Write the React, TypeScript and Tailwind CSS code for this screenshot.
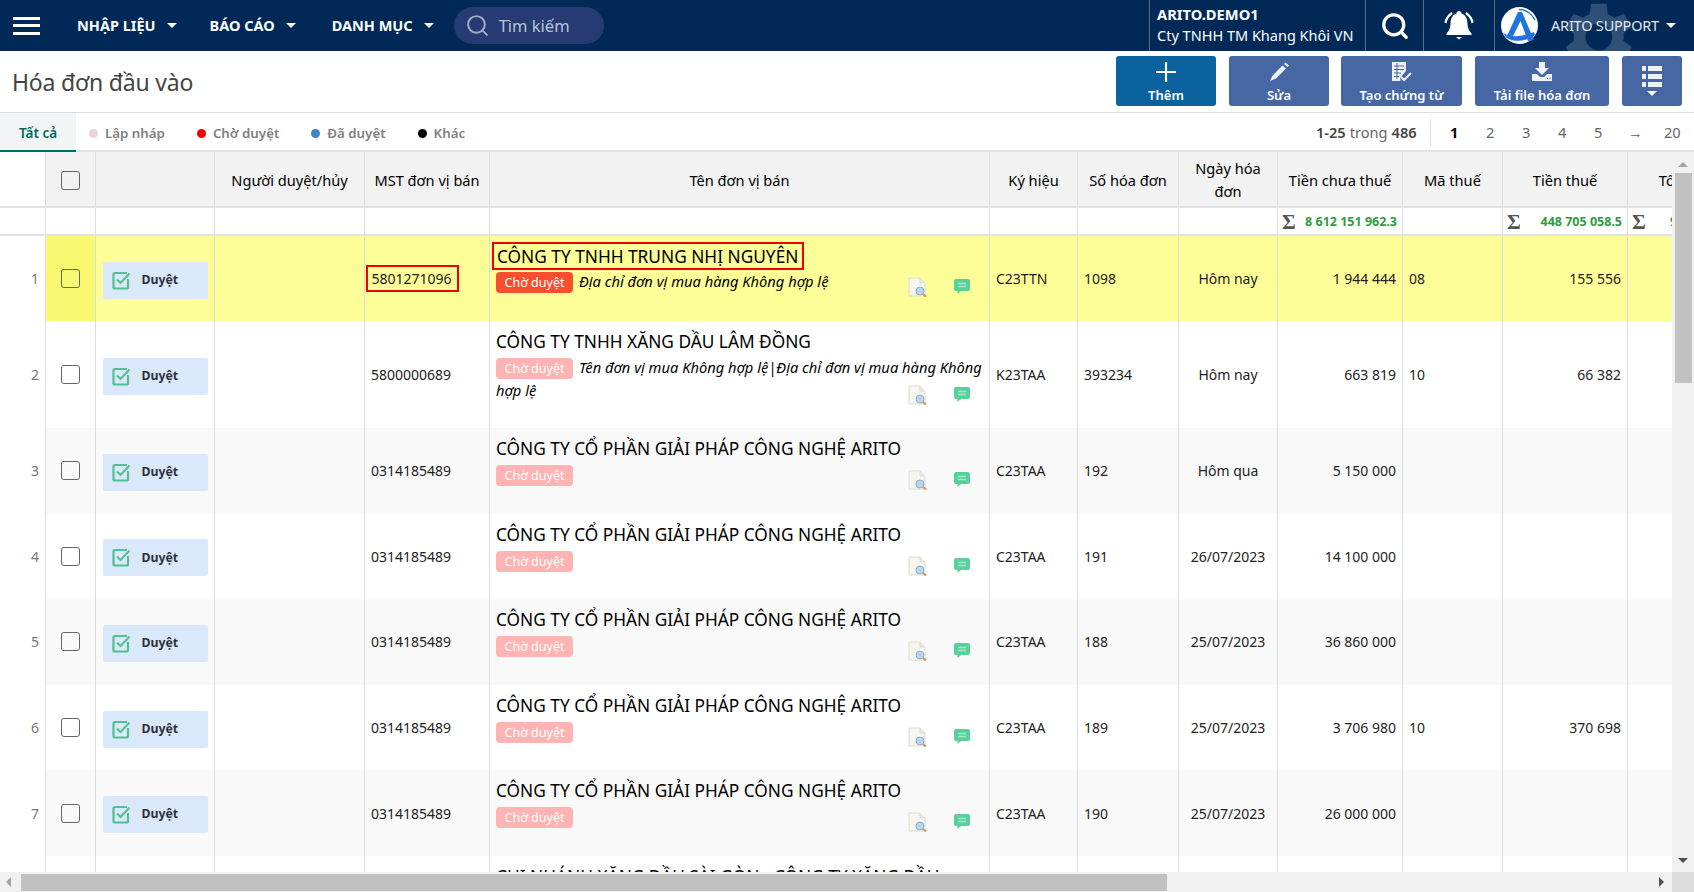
import React from "react";
import { Search } from "lucide-react";

const COLS =
  "grid grid-cols-[46px_50px_119px_150px_125px_500px_88px_101px_99px_125px_100px_125px_147px] w-[1775px]";
const CELL = "border-r border-[#dcdcdc] flex items-center";

type Row = {
  no: number;
  mst: string;
  name: string;
  note?: string;
  sym: string;
  num: string;
  date: string;
  amount: string;
  code?: string;
  tax?: string;
};

const rows: Row[] = [
  { no: 2, mst: "5800000689", name: "CÔNG TY TNHH XĂNG DẦU LÂM ĐỒNG", note: "Tên đơn vị mua Không hợp lệ|Địa chỉ đơn vị mua hàng Không hợp lệ", sym: "K23TAA", num: "393234", date: "Hôm nay", amount: "663 819", code: "10", tax: "66 382" },
  { no: 3, mst: "0314185489", name: "CÔNG TY CỔ PHẦN GIẢI PHÁP CÔNG NGHỆ ARITO", sym: "C23TAA", num: "192", date: "Hôm qua", amount: "5 150 000" },
  { no: 4, mst: "0314185489", name: "CÔNG TY CỔ PHẦN GIẢI PHÁP CÔNG NGHỆ ARITO", sym: "C23TAA", num: "191", date: "26/07/2023", amount: "14 100 000" },
  { no: 5, mst: "0314185489", name: "CÔNG TY CỔ PHẦN GIẢI PHÁP CÔNG NGHỆ ARITO", sym: "C23TAA", num: "188", date: "25/07/2023", amount: "36 860 000" },
  { no: 6, mst: "0314185489", name: "CÔNG TY CỔ PHẦN GIẢI PHÁP CÔNG NGHỆ ARITO", sym: "C23TAA", num: "189", date: "25/07/2023", amount: "3 706 980", code: "10", tax: "370 698" },
  { no: 7, mst: "0314185489", name: "CÔNG TY CỔ PHẦN GIẢI PHÁP CÔNG NGHỆ ARITO", sym: "C23TAA", num: "190", date: "25/07/2023", amount: "26 000 000" },
];

function Caret({ className = "" }: { className?: string }) {
  return <span className={`inline-block w-0 h-0 border-x-[5px] border-x-transparent border-t-[5px] border-t-white ${className}`} />;
}

function NavItem({ label, className }: { label: string; className: string }) {
  return (
    <div className={`flex items-center text-[14.5px] font-bold text-white ${className}`}>
      {label}
      <Caret className="ml-[11px]" />
    </div>
  );
}

function ToolButton({ label, w, color = "bg-[#4667a4]", children }: { label: string; w: string; color?: string; children: React.ReactNode }) {
  return (
    <div className={`${w} ${color} h-[50px] rounded-[3px] flex flex-col items-center justify-end pb-[1px] text-white text-[13px] font-semibold`}>
      <div className="h-[26px] flex items-center justify-center">{children}</div>
      <div className="leading-[20px]">{label}</div>
    </div>
  );
}

function Tab({ dot, label }: { dot: string; label: string }) {
  return (
    <div className="flex items-center gap-[7px] text-[13.3px] font-semibold text-[#808080]">
      <span className={`w-[9px] h-[9px] rounded-full ${dot}`} />
      {label}
    </div>
  );
}

function CheckBox() {
  return <span className="block w-[19px] h-[19px] rounded-[3px] border border-[#666666]" />;
}

function ApproveButton() {
  return (
    <div className="w-[105px] h-[37px] mt-[3px] bg-[#d9e8fa] rounded-[2px] flex items-center pl-[9px] gap-[11px] text-[12.3px] font-bold text-[#2f2f3a]">
      <svg width="19" height="19" viewBox="0 0 19 19" fill="none">
        <path d="M16 8v8a1.500 1.500 0 0 1-1.500 1.500H3A1.500 1.500 0 0 1 1.500 16V3.500A1.500 1.500 0 0 1 3 2h12" stroke="#55bf8e" strokeWidth="2.200" />
        <path d="M5 8.500l3.500 3.500L17.500 2.500" stroke="#55bf8e" strokeWidth="2" />
      </svg>
      Duyệt
    </div>
  );
}

function DocIcon() {
  return (
    <svg width="19" height="20" viewBox="0 0 19 20" className="blur-[0.4px]">
      <path d="M1 1h11l5 5v13H1z" fill="#f6f6ee" stroke="#dcdcd0" />
      <path d="M12 1v5h5" fill="#e8e8dc" stroke="#dcdcd0" />
      <circle cx="12" cy="14" r="4" fill="#bcd4ea" stroke="#8fb0d2" />
      <path d="M15 17l3 2.500" stroke="#d49a5a" strokeWidth="2.200" />
    </svg>
  );
}

function ChatIcon() {
  return (
    <svg width="16" height="15" viewBox="0 0 16 15" className="blur-[0.3px] mt-[2px]">
      <path d="M2 0h12a2 2 0 0 1 2 2v8a2 2 0 0 1-2 2H7l-3.500 3V12H2a2 2 0 0 1-2-2V2a2 2 0 0 1 2-2z" fill="#58d09c" />
      <path d="M4 4.500h8M4 7.500h8" stroke="#a6e6ca" strokeWidth="1.500" />
    </svg>
  );
}

function NameCell({ name, note, active, boxed }: { name: string; note?: string; active?: boolean; boxed?: boolean }) {
  return (
    <div className={`border-r border-[#dcdcdc] pl-[6px] pr-[2px] text-black ${boxed ? "pt-[6px]" : "pt-[7px]"}`}>
      <div className={`text-[17.3px] whitespace-nowrap ${boxed ? "w-[312px] -ml-[4px] px-[3px] pt-[1px] border-2 border-[#f00000] leading-[23px]" : "leading-[28px]"}`}>{name}</div>
      <div className="text-[14.7px] italic leading-[22px]">
        <span className={`inline-block w-[77px] h-[21px] rounded-[4px] text-center not-italic text-[12.5px] text-white leading-[21px] mr-[6px] ${active ? "bg-[#f94f2e]" : "bg-[#ffb3b3]"}`}>Chờ duyệt</span>
        {note}
      </div>
      <div className="flex justify-end items-start gap-[27px] -mt-[16px] pr-[17px]">
        <DocIcon />
        <ChatIcon />
      </div>
    </div>
  );
}

function Sum({ value, pad = "pr-[5px]" }: { value: string; pad?: string }) {
  return (
    <div className={`${CELL} justify-between pl-[4px] pt-[2px] ${pad}`}>
      <span className="text-[21px] font-bold leading-none text-[#555555] font-['Liberation_Serif',serif]">Σ</span>
      <span className="text-[12.5px] font-bold text-[#2f9b3f]">{value}</span>
    </div>
  );
}

function RowCells({ row }: { row: Row }) {
  return (
    <>
      <div className={`${CELL} px-[6px]`}>{row.sym}</div>
      <div className={`${CELL} px-[6px]`}>{row.num}</div>
      <div className={`${CELL} justify-center`}>{row.date}</div>
      <div className={`${CELL} justify-end px-[6px]`}>{row.amount}</div>
      <div className={`${CELL} px-[6px]`}>{row.code}</div>
      <div className={`${CELL} justify-end px-[6px]`}>{row.tax}</div>
      <div className={CELL} />
    </>
  );
}

export default function App() {
  return (
    <div className="w-screen h-screen overflow-hidden flex flex-col bg-white font-['Noto_Sans',sans-serif] text-[#222222]">
      {/* top bar */}
      <header className="h-[51px] shrink-0 bg-[#012958] flex items-center text-white relative overflow-hidden">
        <div className="ml-[13px] w-[27px] flex flex-col gap-[4.500px]">
          <span className="h-[3px] bg-white" />
          <span className="h-[3px] bg-white" />
          <span className="h-[3px] bg-white" />
        </div>
        <NavItem label="NHẬP LIỆU" className="ml-[37px]" />
        <NavItem label="BÁO CÁO" className="ml-[33px]" />
        <NavItem label="DANH MỤC" className="ml-[36px]" />
        <div className="ml-[20px] w-[150px] h-[37px] rounded-full bg-[#263a73] flex items-center pl-[11px] gap-[9px] text-[16.5px] text-[#b8c3d6]">
          <Search size={25} strokeWidth={1.900} className="text-[#9fb0c8]" />
          <span className="pt-[2px]">Tìm kiếm</span>
        </div>
        <div className="ml-auto self-stretch flex">
          <div className="w-[216px] border-l border-[#55708f] pl-[7px] pb-[1px] flex flex-col justify-center">
            <div className="text-[14.7px] font-bold leading-[20px]">ARITO.DEMO1</div>
            <div className="text-[14.5px] leading-[22px]">Cty TNHH TM Khang Khôi VN</div>
          </div>
          <div className="w-[58px] border-l border-[#55708f] flex items-center justify-center">
            <Search size={30} strokeWidth={2.600} className="text-white" />
          </div>
          <div className="w-[71px] border-l border-[#55708f] flex items-center justify-center">
            <svg width="32" height="32" viewBox="0 0 32 32" fill="white">
              <path d="M16 1c1.500 0 2.500 1 2.500 2.500C23 5 24.500 9 24.500 14c0 4 1.500 7 4 9.500V25h-25v-1.500c2.500-2.500 4-5.500 4-9.500 0-5 1.500-9 6-10.500C13.500 2 14.500 1 16 1z" />
              <path d="M13 27h6l-3 2.500z" />
              <path d="M2.500 13C3 9 5.500 5.500 9 3M29.500 13C29 9 26.500 5.500 23 3" fill="none" stroke="white" strokeWidth="2.200" />
            </svg>
          </div>
          <div className="w-[200px] border-l border-[#55708f] relative flex items-center pl-[6px]">
            <svg width="37" height="37" viewBox="0 0 37 37" className="shrink-0 relative z-10">
              <circle cx="18.500" cy="18.500" r="18.500" fill="white" />
              <path d="M17 5h4l12 28-6 1-7.500-20L12 29H6z" fill="#1f74e0" />
              <path d="M1.500 25C6 30 20 31 33 25l1 3C24 36 8 35 4 29z" fill="#1f74e0" />
              <path d="M18 2.500C25 2.500 31 7 34 13" fill="none" stroke="#1f74e0" strokeWidth="1.500" />
            </svg>
            <span className="ml-[13px] text-[14.5px] tracking-[-0.2px] text-[#e3e8ef] relative z-10">ARITO SUPPORT</span>
            <Caret className="ml-[7px] relative z-10" />
            {/* gear watermark */}
            <svg width="92" height="92" viewBox="0 0 24 24" className="absolute left-[54px] top-[-9px] text-white opacity-[0.18]" fill="currentColor">
              <path fillRule="evenodd" d="M19.400 13a7.500 7.500 0 0 0 0-2l2.100-1.600-2-3.400-2.500 1a7.500 7.500 0 0 0-1.700-1L15 3.300h-4l-.4 2.700a7.500 7.500 0 0 0-1.700 1l-2.500-1-2 3.400L6.500 11a7.500 7.500 0 0 0 0 2l-2.100 1.600 2 3.400 2.500-1c.5.400 1.100.7 1.700 1l.4 2.700h4l.4-2.700c.6-.3 1.200-.6 1.700-1l2.500 1 2-3.400zM13 15.500a3.500 3.500 0 1 1 0-7 3.500 3.500 0 0 1 0 7z" />
            </svg>
          </div>
        </div>
      </header>

      {/* title + actions */}
      <div className="h-[62px] shrink-0 border-b border-[#dddddd] flex items-start pt-[5px] pl-[12px] pr-[12px]">
        <h1 className="text-[23px] leading-[52px] text-[#444444] tracking-[-0.2px]">Hóa đơn đầu vào</h1>
        <div className="ml-auto flex gap-[13px]">
          <ToolButton label="Thêm" w="w-[100px]" color="bg-[#0a639f]">
            <svg width="22" height="22" viewBox="0 0 22 22"><path d="M11 1v20M1 11h20" stroke="white" strokeWidth="2.200" /></svg>
          </ToolButton>
          <ToolButton label="Sửa" w="w-[100px]">
            <svg width="20" height="20" viewBox="0 0 20 20" fill="#eef1f7">
              <path d="M13.500 3.500l3.500 3L7 16.500l-6 2.500 2.500-5.500z" />
              <path d="M15 2l1.500-1.500L20 3.500 18.500 5z" />
            </svg>
          </ToolButton>
          <ToolButton label="Tạo chứng từ" w="w-[121px] -ml-[1px]">
            <svg width="22" height="20" viewBox="0 0 22 20" fill="#eef1f7">
              <path d="M1 0h14v9l-6 7 .5 3H1z" />
              <path d="M3 4h10M3 7.500h10M3 11h7M3 14.500h5M6 1v16" stroke="#4667a4" strokeWidth="1" />
              <path d="M10 15l3 3 7-7" fill="none" stroke="#eef1f7" strokeWidth="2" />
            </svg>
          </ToolButton>
          <ToolButton label="Tải file hóa đơn" w="w-[134px]">
            <svg width="22" height="20" viewBox="0 0 22 20" fill="#eef1f7">
              <path d="M8 0h6v6h4l-7 7-7-7h4z" />
              <path d="M1 12h5l3 3h4l3-3h5v7H1z" />
              <path d="M16 16.500h1M18.500 16.500h1" stroke="#4667a4" strokeWidth="1.500" />
            </svg>
          </ToolButton>
          <div className="w-[60px] h-[50px] bg-[#4667a4] rounded-[3px] flex flex-col items-center justify-center gap-[4px]">
            <svg width="20" height="21" viewBox="0 0 20 21" fill="#eef1f7">
              <path d="M0 0h4v5H0zM6 0h14v5H6zM0 8h4v5H0zM6 8h14v5H6zM0 16h4v5H0zM6 16h14v5H6z" />
            </svg>
            <Caret />
          </div>
        </div>
      </div>

      {/* status tabs + pager */}
      <div className="h-[39px] shrink-0 border-b-2 border-[#e2e2e2] flex items-center relative">
        <div className="w-[76px] h-[39px] -mb-[2px] pt-[4px] bg-[#f3f4f5] border-b-2 border-[#006b5e] flex items-center justify-center text-[13.5px] font-semibold text-[#006b5e]">Tất cả</div>
        <div className="ml-[13px] pt-[4px] flex gap-[32px]">
          <Tab dot="bg-[#edd3dd]" label="Lập nháp" />
          <Tab dot="bg-[#f20000]" label="Chờ duyệt" />
          <Tab dot="bg-[#3f86c6]" label="Đã duyệt" />
          <Tab dot="bg-black" label="Khác" />
        </div>
        <div className="ml-auto pt-[2px] flex items-center text-[14.6px] text-[#666666]">
          <div className="w-[115px] h-[27px] border-r border-[#dddddd] flex items-center gap-[4px]">
            <b className="font-semibold text-[#444444]">1-25</b> trong <b className="font-semibold text-[#444444]">486</b>
          </div>
          <div className="flex w-[263px] pl-[19px]">
            <span className="w-[36px] font-bold text-black">1</span>
            <span className="w-[36px]">2</span>
            <span className="w-[36px]">3</span>
            <span className="w-[36px]">4</span>
            <span className="w-[34px]">5</span>
            <span className="w-[36px]">→</span>
            <span>20</span>
          </div>
        </div>
      </div>

      {/* grid */}
      <div className="flex-1 min-h-0 flex">
        <div className="flex-1 min-w-0 overflow-hidden text-[14px] text-[#222222]">
          <div className={`${COLS} h-[56px] border-b-2 border-[#e2e2e2] text-center text-black`}>
            <div className="border-r border-[#dcdcdc]" />
            <div className={`${CELL} justify-center pt-[2px] bg-[#f2f2f2]`}><CheckBox /></div>
            <div className={`${CELL} bg-[#f2f2f2]`} />
            {["Người duyệt/hủy", "MST đơn vị bán", "Tên đơn vị bán", "Ký hiệu", "Số hóa đơn", "Ngày hóa đơn", "Tiền chưa thuế", "Mã thuế", "Tiền thuế", "Tổng tiền TT"].map((h) => (
              <div key={h} className={`${CELL} justify-center bg-[#f2f2f2] px-[4px] pt-[2px] text-[14.6px] leading-[23px]`}>{h}</div>
            ))}
          </div>

          <div className={`${COLS} h-[28px] border-b-2 border-[#e2e2e2]`}>
            <div className={CELL} /><div className={CELL} /><div className={CELL} /><div className={CELL} /><div className={CELL} />
            <div className={CELL} /><div className={CELL} /><div className={CELL} /><div className={CELL} />
            <Sum value="8 612 151 962.3" />
            <div className={CELL} />
            <Sum value="448 705 058.5" />
            <Sum value="9 060 857 020.8" pad="pr-[12px]" />
          </div>

          {/* highlighted row */}
          <div className={`${COLS} h-[85px] bg-[#fefe99]`}>
            <div className={`${CELL} justify-end pr-[6px] bg-white text-[#777777]`}>1</div>
            <div className={`${CELL} justify-center bg-[#f8f871]`}><CheckBox /></div>
            <div className={`${CELL} justify-center`}><ApproveButton /></div>
            <div className={CELL} />
            <div className={`${CELL} pl-[1px]`}>
              <span className="border-2 border-[#f00000] w-[93px] h-[27px] flex items-center pl-[3.5px]">5801271096</span>
            </div>
            <NameCell name="CÔNG TY TNHH TRUNG NHỊ NGUYÊN" note="Địa chỉ đơn vị mua hàng Không hợp lệ" active boxed />
            <RowCells row={{ no: 1, mst: "", name: "", sym: "C23TTN", num: "1098", date: "Hôm nay", amount: "1 944 444", code: "08", tax: "155 556" }} />
          </div>

          {rows.map((r) => (
            <div key={r.no} className={`${COLS} ${r.no === 2 ? "h-[107px]" : "h-[85.6px]"} ${r.no % 2 === 1 ? "bg-[#f9f9f9]" : ""}`}>
              <div className={`${CELL} justify-end pr-[6px] bg-white text-[#777777]`}>{r.no}</div>
              <div className={`${CELL} justify-center`}><CheckBox /></div>
              <div className={`${CELL} justify-center`}><ApproveButton /></div>
              <div className={CELL} />
              <div className={`${CELL} px-[6px]`}>{r.mst}</div>
              <NameCell name={r.name} note={r.note} />
              <RowCells row={r} />
            </div>
          ))}

          <div className={`${COLS} h-[86px]`}>
            <div className={CELL} /><div className={CELL} /><div className={CELL} /><div className={CELL} /><div className={CELL} />
            <NameCell name="CHI NHÁNH XĂNG DẦU SÀI GÒN - CÔNG TY XĂNG DẦU" />
            <div className={CELL} /><div className={CELL} /><div className={CELL} /><div className={CELL} /><div className={CELL} /><div className={CELL} /><div className={CELL} />
          </div>
        </div>

        {/* vertical scrollbar */}
        <div className="w-[22px] shrink-0 bg-[#f1f1f1] flex flex-col items-center pt-[10px] pb-[9px]">
          <span className="w-0 h-0 border-x-[5px] border-x-transparent border-b-[5px] border-b-[#a3a3a3]" />
          <div className="w-[17px] h-[210px] bg-[#c1c1c1] mt-[6px]" />
          <span className="mt-auto w-0 h-0 border-x-[5px] border-x-transparent border-t-[5px] border-t-[#505050]" />
        </div>
      </div>

      {/* horizontal scrollbar */}
      <div className="h-[20px] shrink-0 flex">
        <div className="flex-1 bg-[#f1f1f1] flex items-center">
          <span className="ml-[6px] w-0 h-0 border-y-[5px] border-y-transparent border-r-[5px] border-r-[#a3a3a3]" />
          <div className="ml-[10px] w-[1146px] h-[17px] bg-[#c1c1c1]" />
          <span className="ml-auto mr-[8px] w-0 h-0 border-y-[5px] border-y-transparent border-l-[5px] border-l-[#505050]" />
        </div>
        <div className="w-[22px] bg-[#dcdcdc]" />
      </div>
    </div>
  );
}
